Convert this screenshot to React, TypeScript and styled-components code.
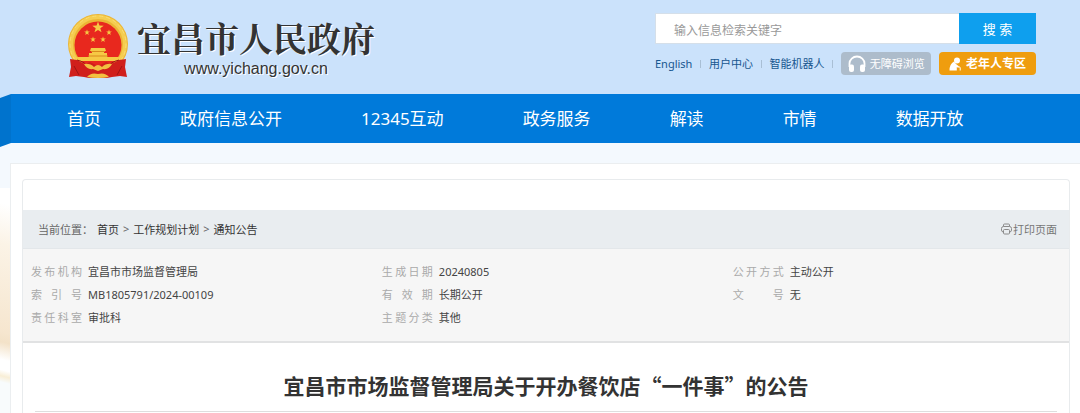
import React from "react";
import styled, { createGlobalStyle } from "styled-components";

const GlobalStyle = createGlobalStyle`
  * { box-sizing: border-box; }
  body {
    margin: 0;
    background: #fff;
    color: #444;
    font-family: "Noto Sans", "Noto Sans CJK SC", sans-serif;
    font-size: 11px;
  }
  a { color: inherit; text-decoration: none; }
`;

const Header = styled.header`
  display: flex;
  justify-content: space-between;
  align-items: flex-start;
  min-height: 94px;
  padding: 13px 44px 0 67px;
  background: #cbe2fb;
`;

const Brand = styled.a`
  display: flex;
  align-items: flex-start;
  gap: 8px;
`;

const BrandText = styled.span`
  display: flex;
  flex-direction: column;
  align-items: center;
  padding-top: 2px;
  color: #333;
  text-shadow: 1px 1px 0 #fff;
`;

const BrandName = styled.span`
  font-family: "Noto Serif CJK SC", "Noto Sans CJK SC", serif;
  font-size: 34px;
  font-weight: 700;
  line-height: 46px;
`;

const BrandUrl = styled.span`
  font-family: "Liberation Sans", sans-serif;
  font-size: 16px;
  line-height: 16px;
`;

const Tools = styled.div`
  flex: 0 1 381px;
  display: flex;
  flex-direction: column;
  gap: 8px;
`;

const SearchForm = styled.form`
  display: flex;
  height: 31px;
`;

const SearchInput = styled.input`
  flex: 1;
  min-width: 0;
  padding: 3px 18px 0;
  border: 1px solid #d5dfe9;
  border-right: 0;
  background: #fff;
  font-family: inherit;
  font-size: 12px;
  &::placeholder { color: #999; opacity: 1; }
`;

const SearchButton = styled.button`
  width: 77px;
  padding: 0;
  border: 0;
  background: #0e9fee;
  color: #fff;
  font-family: inherit;
  font-size: 13px;
`;

const QuickLinks = styled.div`
  display: flex;
  align-items: center;
  justify-content: space-between;
  height: 23px;
  color: #17568f;
  line-height: 16px;
  white-space: nowrap;
`;

const Divider = styled.span`
  width: 1px;
  height: 8px;
  background: #a9bfd5;
`;

const Pill = styled.a<{ $tone: "grey" | "orange" }>`
  display: flex;
  align-items: center;
  justify-content: center;
  gap: 4px;
  height: 23px;
  width: ${(p) => (p.$tone === "grey" ? 90 : 97)}px;
  border-radius: 4px;
  background: ${(p) => (p.$tone === "grey" ? "#adbccb" : "#ef9d0e")};
  color: #fff;
  font-size: ${(p) => (p.$tone === "grey" ? 11 : 12)}px;
  font-weight: ${(p) => (p.$tone === "grey" ? 400 : 700)};
`;

const NavBar = styled.nav`
  position: relative;
  z-index: 1;
  display: flex;
  height: 49px;
  background:
    linear-gradient(to right, transparent 11px, #007ada 11px),
    linear-gradient(#cbe2fb 50%, #f4f9fe 50%);
`;

const NavFold = styled.span`
  flex: none;
  width: 11px;
  background: #0073cd;
  transform: skewY(-20deg);
  transform-origin: right;
`;

const NavList = styled.ul`
  display: flex;
  align-items: center;
  gap: 79px;
  margin: 0;
  padding: 0 56px 2px;
  list-style: none;
  color: #fff;
  font-size: 17px;
  white-space: nowrap;
`;

const Backdrop = styled.main`
  padding: 20px 0 0 10px;
  background:
    linear-gradient(#f4f9fe, #f4f9fe) 0 0 / 100% 45px no-repeat,
    linear-gradient(194deg, #fff 60px, #fbf3e6 100px, #f6e6cf 185px, #f3e2c8 195px, #fff 212px, #fff 222px, #f8eed6 228px, #f8fbfc 234px) 0 0 / 10px 270px no-repeat,
    #f8fbfc;
`;

const Sheet = styled.div`
  padding: 15px 10px 0 11px;
  border: 1px solid #ebeef0;
  border-width: 1px 0 0 1px;
  background: #fff;
`;

const Article = styled.article`
  padding: 30px 0 1px;
  border: 1px solid #e8ebed;
  border-bottom: 0;
  border-radius: 4px 4px 0 0;
`;

const Location = styled.div`
  display: flex;
  align-items: center;
  justify-content: space-between;
  height: 39px;
  padding: 0 12px 0 15px;
  background: #e9edf0;
  border-bottom: 1px solid #e3e7ea;
  color: #666;
`;

const Crumbs = styled.nav`
  display: flex;
  gap: 4px;
  a { color: #333; }
`;

const PrintButton = styled.button`
  display: flex;
  align-items: center;
  gap: 1px;
  padding: 0;
  border: 0;
  background: none;
  color: #777;
  font: inherit;
`;

const Meta = styled.dl`
  display: grid;
  grid-template-columns: 24fr 24fr 23fr;
  margin: 0;
  padding: 11px 0 12px 8px;
  background: #f6f6f6;
  border-bottom: 2px solid #e1e2e3;
`;

const MetaItem = styled.div`
  display: flex;
  gap: 6px;
  min-height: 23px;
  line-height: 23px;
`;

const MetaLabel = styled.dt`
  width: 51px;
  color: #aaa;
  text-align: justify;
  text-align-last: justify;
`;

const MetaValue = styled.dd`
  margin: 0;
  color: #444;
`;

const Title = styled.h1`
  margin: 0 12px;
  padding: 27px 0 11px;
  border-bottom: 1px solid #dedede;
  color: #333;
  font-family: "Noto Sans CJK SC", sans-serif;
  font-size: 21px;
  line-height: 30px;
  text-align: center;
`;

const star = (cx: number, cy: number, r: number) =>
  Array.from({ length: 10 }, (_, i) => {
    const d = i % 2 ? r * 0.4 : r;
    const a = (Math.PI / 5) * i - Math.PI / 2;
    return `${(cx + d * Math.cos(a)).toFixed(2)},${(cy + d * Math.sin(a)).toFixed(2)}`;
  }).join(" ");

const Emblem = () => (
  <svg width="62" height="66" viewBox="0 0 62 66" aria-hidden="true">
    <circle cx="31" cy="31" r="30" fill="#ecb535" />
    <circle cx="31" cy="31" r="27" fill="none" stroke="#f5cd50" strokeWidth="4" />
    <circle cx="31" cy="31" r="28" fill="none" stroke="#fbdd70" strokeWidth="1" strokeDasharray="4 3" />
    <circle cx="31" cy="32" r="23.500" fill="#e8281e" />
    <g fill="#f6c945">
      <polygon points={star(31, 14.5, 6)} />
      <polygon points={star(20, 19.5, 3)} />
      <polygon points={star(42, 19.5, 3)} />
      <polygon points={star(26, 26.500, 3)} />
      <polygon points={star(36, 26.500, 3)} />
      <path d="M24 35h14l1 3h-2v2h3v4h12l-1 4H11l-1-4h12v-4h3v-2h-2z" />
    </g>
    <path d="M24 38.500h14M21 43h20" stroke="#d98a1d" strokeWidth="1" />
    <path d="M3 46l7 1 8 4 5-2 8 4 8-4 5 2 8-4 7-1-1 8 2 10-7-1-8 1-5 1H22l-5-1-8-1-7 1 2-10z" fill="#d01f1b" />
    <path d="M10 47q9 2 11 8M52 47q-9 2-11 8M7 53l5 9M55 53l-5 9" fill="none" stroke="#9e1414" strokeWidth="1" />
    <path d="M17 51q6-1 10 3 4-4 8 0 4-4 10-3-3 6-9 5l-5 2-5-2q-6 1-9-5zM20 64q4-5 11-3 7-2 11 3-5 1-11 1t-11-1z" fill="#f2c040" />
  </svg>
);

const Headset = () => (
  <svg width="18" height="18" viewBox="0 0 18 18" fill="none" aria-hidden="true">
    <path d="M1.500 12V8.500a7.500 7 0 0 1 15 0V12" stroke="#fff" strokeWidth="1.800" />
    <rect x="1" y="9.500" width="5" height="7.500" rx="2" fill="#fff" />
    <rect x="12" y="9.500" width="5" height="7.500" rx="2" fill="#fff" />
  </svg>
);

const Elder = () => (
  <svg width="13" height="14" viewBox="0 0 13 14" fill="#fff" aria-hidden="true">
    <circle cx="8" cy="3.500" r="3" />
    <path d="M5 4.500Q.5 7 .5 13.500h7.300V10l1.700.8V9L7 7z" />
    <path d="M8.500 9.800h1.500q1.200 0 1.200 1.200v2.500" fill="none" stroke="#fff" strokeWidth="1" />
  </svg>
);

const Printer = () => (
  <svg width="11" height="12" viewBox="0 0 11 12" fill="none" stroke="#8a8a8a" strokeLinejoin="round" aria-hidden="true">
    <path d="M2.500 3.500V2Q2.500 1 3.500 1h4Q8.500 1 8.500 2v1.500M2.500 9Q.5 9 .5 7V5.500Q.5 3.500 2.500 3.500h6q2 0 2 2V7q0 2-2 2M3.500 6.500h4q1 0 1 1V10q0 1-1 1h-4q-1 0-1-1V7.500q0-1 1-1z" />
  </svg>
);

const navItems = ["首页", "政府信息公开", "12345互动", "政务服务", "解读", "市情", "数据开放"];

const meta: [string, string][] = [
  ["发布机构", "宜昌市市场监督管理局"],
  ["生成日期", "20240805"],
  ["公开方式", "主动公开"],
  ["索引号", "MB1805791/2024-00109"],
  ["有效期", "长期公开"],
  ["文号", "无"],
  ["责任科室", "审批科"],
  ["主题分类", "其他"],
];

export default function App() {
  return (
    <>
      <GlobalStyle />
      <Header>
        <Brand href="#">
          <Emblem />
          <BrandText>
            <BrandName>宜昌市人民政府</BrandName>
            <BrandUrl>www.yichang.gov.cn</BrandUrl>
          </BrandText>
        </Brand>
        <Tools>
          <SearchForm role="search">
            <SearchInput type="text" aria-label="输入信息检索关键字" placeholder="输入信息检索关键字" />
            <SearchButton type="button">搜 索</SearchButton>
          </SearchForm>
          <QuickLinks>
            <a href="#">English</a>
            <Divider />
            <a href="#">用户中心</a>
            <Divider />
            <a href="#">智能机器人</a>
            <Divider />
            <Pill href="#" $tone="grey"><Headset />无障碍浏览</Pill>
            <Pill href="#" $tone="orange"><Elder />老年人专区</Pill>
          </QuickLinks>
        </Tools>
      </Header>
      <NavBar>
        <NavFold />
        <NavList>
          {navItems.map((item) => (
            <li key={item}><a href="#">{item}</a></li>
          ))}
        </NavList>
      </NavBar>
      <Backdrop>
        <Sheet>
          <Article>
            <Location>
              <Crumbs>
                <span>当前位置：</span>
                <a href="#">首页</a>
                <span>&gt;</span>
                <a href="#">工作规划计划</a>
                <span>&gt;</span>
                <a href="#">通知公告</a>
              </Crumbs>
              <PrintButton type="button"><Printer />打印页面</PrintButton>
            </Location>
            <Meta>
              {meta.map(([label, value]) => (
                <MetaItem key={label}>
                  <MetaLabel>{label}</MetaLabel>
                  <MetaValue>{value}</MetaValue>
                </MetaItem>
              ))}
            </Meta>
            <Title>宜昌市市场监督管理局关于开办餐饮店“一件事”的公告</Title>
          </Article>
        </Sheet>
      </Backdrop>
    </>
  );
}
